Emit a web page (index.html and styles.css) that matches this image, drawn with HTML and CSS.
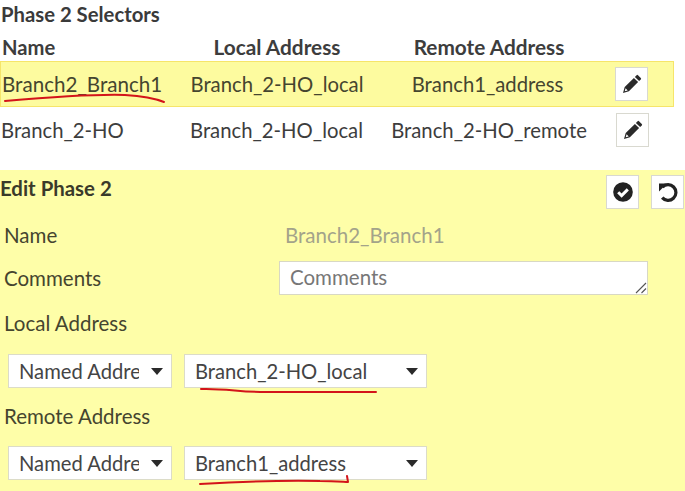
FILE: index.html
```html
<!DOCTYPE html>
<html lang="en">
<head>
<meta charset="utf-8">
<title>Phase 2 Selectors</title>
<link rel="stylesheet" href="styles.css">
</head>
<body>
<svg width="0" height="0" class="defs" aria-hidden="true">
  <defs>
    <symbol id="pencil" viewBox="0 0 20 20">
      <path d="M14.6 1.2a1 1 0 0 1 1.4 0l2.8 2.8a1 1 0 0 1 0 1.4l-1.7 1.7-4.2-4.2zM11.9 3.9l4.2 4.2-9.2 9.2-5.9 1.7 1.7-5.9zM3.6 14.3l-.9 3 3-.9z" fill="#2a2a2a" fill-rule="evenodd"/>
    </symbol>
  </defs>
</svg>
<main class="page">
  <section class="selectors">
    <h2 class="title">Phase 2 Selectors</h2>
    <div class="row head">
      <div class="name">Name</div>
      <div class="local">Local Address</div>
      <div class="remote">Remote Address</div>
    </div>
    <div class="row item active">
      <div class="name">Branch2_Branch1</div>
      <div class="local">Branch_2-HO_local</div>
      <div class="remote shifted">Branch1_address</div>
      <button class="icon-btn" type="button"><svg class="ico"><use href="#pencil"/></svg></button>
    </div>
    <div class="row item">
      <div class="name">Branch_2-HO</div>
      <div class="local">Branch_2-HO_local</div>
      <div class="remote">Branch_2-HO_remote</div>
      <button class="icon-btn" type="button"><svg class="ico"><use href="#pencil"/></svg></button>
    </div>
  </section>
  <section class="editor">
    <div class="editor-head">
      <h2 class="edit-title">Edit Phase 2</h2>
      <button class="icon-btn" type="button">
        <svg class="ico" viewBox="0 0 20 20"><circle cx="10" cy="10" r="9.8" fill="#222"/><path d="M5.2 10.2l3.4 3.4 6.2-6.2" fill="none" stroke="#fff" stroke-width="3"/></svg>
      </button>
      <button class="icon-btn" type="button">
        <svg class="ico" viewBox="0 0 20 20"><path d="M4.4 5.2A7.8 7.8 0 1 1 4.2 15.6" fill="none" stroke="#222" stroke-width="3.2"/><path d="M1 1.6l8 0-8 8z" fill="#222"/></svg>
      </button>
    </div>
    <div class="field name-field">
      <span class="label">Name</span>
      <span class="readonly">Branch2_Branch1</span>
    </div>
    <div class="field comments-field">
      <span class="label">Comments</span>
      <div class="textarea">
        Comments
        <svg class="grip" viewBox="0 0 12 12"><path d="M1 11L11 1M6.5 11l4.5-4.5" stroke="#555" stroke-width="1.1" fill="none"/></svg>
      </div>
    </div>
    <div class="label block-label">Local Address</div>
    <div class="selects">
      <div class="select type"><span class="clip">Named Address</span><i class="caret"></i></div>
      <div class="select value"><span class="clip">Branch_2-HO_local</span><i class="caret"></i></div>
    </div>
    <div class="label block-label second">Remote Address</div>
    <div class="selects last">
      <div class="select type"><span class="clip">Named Address</span><i class="caret"></i></div>
      <div class="select value"><span class="clip">Branch1_address</span><i class="caret"></i></div>
    </div>
  </section>
  <svg class="ink" viewBox="0 0 685 491" aria-hidden="true">
    <path d="M5 101C40 98 90 94 125 95C142 96 154 98 164 102"/>
    <path d="M201 389C225 388 245 393 272 392C310 392 340 392 376 392"/>
    <path d="M200 484C235 482 280 480 320 481C335 481 345 482 348 482L347 476"/>
  </svg>
</main>
</body>
</html>
```
FILE: styles.css
```css
* { box-sizing: border-box; }
html, body { margin: 0; padding: 0; background: #fff; }
body { font-family: Lato, "Open Sans", sans-serif; font-size: 20.3px; color: #3d3d3d; }
.defs { position: absolute; }
.page { position: relative; width: 685px; height: 491px; overflow: hidden; }
.selectors { height: 170px; padding-top: 2px; }
.title { margin: 0; height: 24px; font-size: 20.3px; line-height: 24px; font-weight: 700; color: #3a3a3a; padding-left: 1px; }
.row { display: grid; grid-template-columns: 190px 174px 250px 33px; align-items: center; }
.head { height: 35px; font-weight: 700; font-size: 20.8px; padding-top: 6px; }
.head .name { padding-left: 2px; font-size: 20.2px; }
.local, .remote { text-align: center; white-space: nowrap; }
.shifted { margin-left: -5px; }
.item { height: 45px; width: 674px; }
.item .name { padding-left: 2px; }
.active { background: #fdfb9f; border: 1px solid #f6e56a; height: 46px; color: #45452f; }
.active .name { padding-left: 1px; font-size: 20.6px; }
.active .local { margin-left: -2px; }
.item:not(.active) .icon-btn { margin-left: 2px; }
.item:not(.active) .local { margin-left: -1px; }
.item:not(.active) .name { padding-left: 1px; }
.icon-btn { width: 33px; height: 34px; padding: 0; background: #fff; border: 1px solid #d9d9d0; display: flex; align-items: center; justify-content: center; }
.ico { width: 20px; height: 20px; display: block; }
.editor { height: 321px; background: #fefea8; padding-top: 5px; color: #45452f; font-size: 20.5px; }
.editor-head { display: flex; align-items: flex-start; height: 33px; gap: 12px; padding-right: 1px; }
.edit-title { margin: -1px auto 0 0; font-size: 20.4px; font-weight: 700; color: #3a3a2a; line-height: 28px; }
.field { display: flex; align-items: center; }
.label { padding-left: 4px; }
.name-field { height: 27px; margin-top: 13px; }
.name-field .label { width: 285px; }
.readonly { color: #a3a38a; }
.comments-field { height: 34px; margin-top: 13px; }
.comments-field .label { width: 279px; }
.textarea { position: relative; width: 369px; height: 34px; background: #fff; border: 1px solid #d8d8c4; padding-left: 10px; line-height: 31px; color: #777; }
.grip { position: absolute; right: 0; bottom: 0; width: 12px; height: 12px; }
.block-label { height: 24px; line-height: 24px; margin-top: 16px; }
.second { margin-top: 16px; }
.selects { display: flex; gap: 12px; padding-left: 8px; margin-top: 19px; }
.last { margin-top: 18px; }
.select { position: relative; height: 34px; background: #fff; border: 1px solid #dcdcc8; display: flex; align-items: center; padding-left: 10px; color: #444; font-size: 20.2px; }
.type { width: 164px; }
.value { width: 243px; }
.clip { display: block; overflow: hidden; white-space: nowrap; }
.type .clip { width: 120px; }
.caret { position: absolute; right: 8px; top: 13px; width: 0; height: 0; border-left: 6px solid transparent; border-right: 6px solid transparent; border-top: 7px solid #2a2a2a; }
.ink { position: absolute; left: 0; top: 0; width: 685px; height: 491px; pointer-events: none; }
.ink path { fill: none; stroke: #d3141a; stroke-width: 2; stroke-linecap: round; stroke-linejoin: round; }
```
